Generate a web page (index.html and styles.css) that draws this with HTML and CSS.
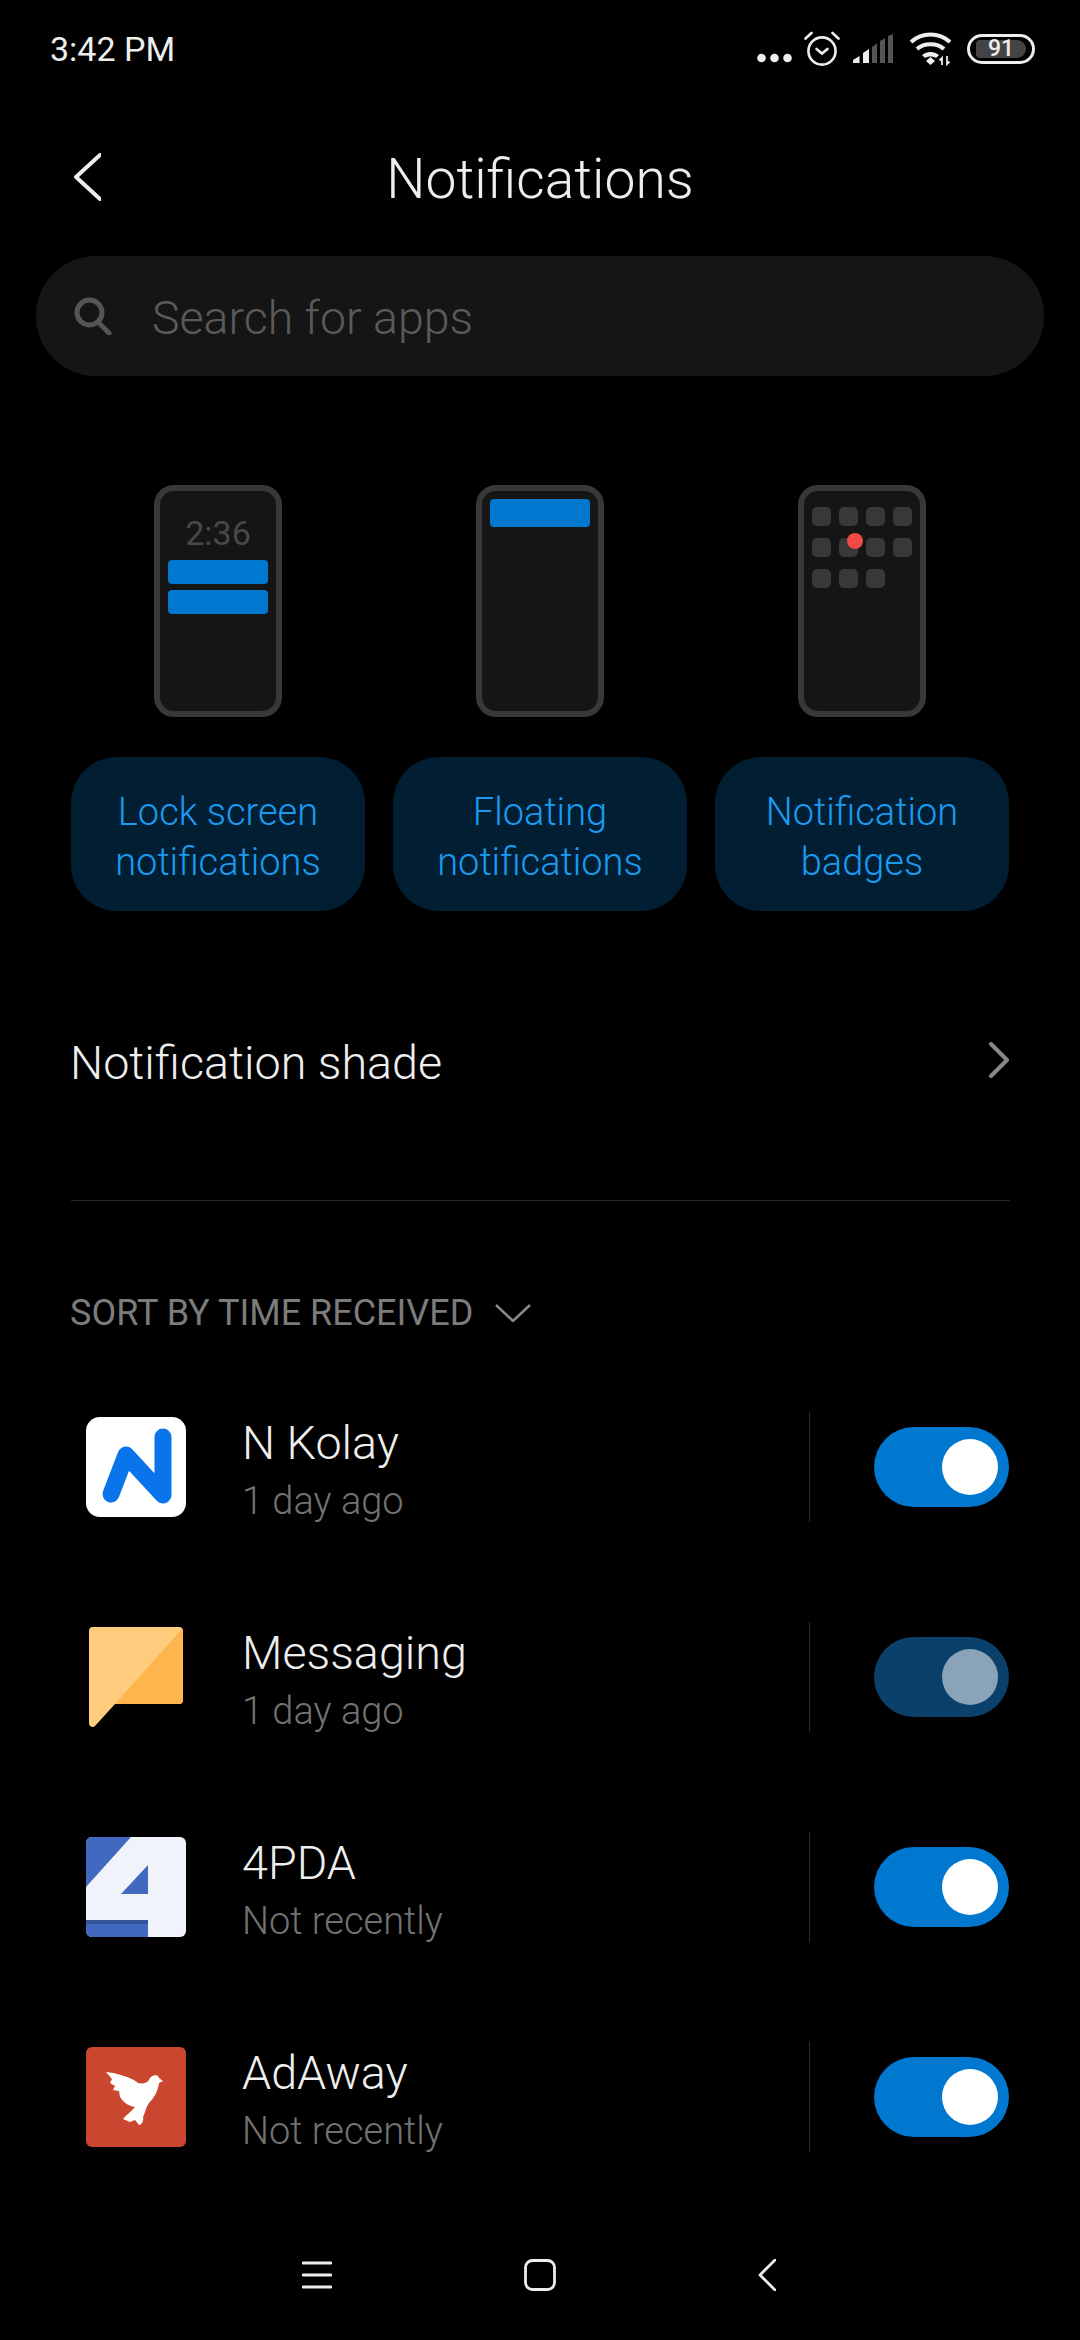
FILE: index.html
```html
<!DOCTYPE html>
<html lang="en">
<head>
  <meta charset="UTF-8" />
  <meta name="viewport" content="width=device-width, initial-scale=1" />
  <title>Notifications</title>
  <link rel="stylesheet" href="styles.css">
</head>
<body>
  <div class="status-bar">
    <span class="clock">3:42 PM</span>
    <div class="status-icons">
      <svg class="ic-dots" width="35" height="36" viewBox="0 0 35 36"><g fill="#eee"><circle cx="4.5" cy="27" r="4.3"/><circle cx="17.5" cy="27" r="4.3"/><circle cx="30.5" cy="27" r="4.3"/></g></svg>
      <svg class="ic-alarm" width="36" height="36" viewBox="0 0 36 36"><g fill="none" stroke="#eee" stroke-width="2.6" stroke-linecap="round"><circle cx="18" cy="20" r="13.6"/><path d="M12.5 18l5.5 4.5 5.5-4.5"/><path d="M1.5 7.500L7.500 2"/><path d="M34.500 7.500L28.500 2"/></g></svg>
      <svg class="ic-signal" width="40" height="30" viewBox="0 0 40 30"><path d="M0 29v-3l6.500-4v7z" fill="#eee"/><path d="M10 29v-10l6-4v14z" fill="#eee"/><path d="M19 29v-16l5-3.500v19.500z" fill="#555"/><path d="M27 29v-22l5-3v25z" fill="#555"/><path d="M35 29v-27l5-2v29z" fill="#555"/></svg>
      <svg class="ic-wifi" width="43" height="34" viewBox="0 0 43 34"><g fill="none" stroke="#eee" stroke-width="4"><path d="M2 10c11-10 28-10 39 0"/><path d="M8 17c7-6.500 20-6.500 27 0"/></g><path d="M13 23c5-4 12-4 17 0l-3 3c-3-2-8-2-11 0z" fill="#eee"/><path d="M21.500 25l4.500 4-4.500 4-4.500-4z" fill="#eee"/><path d="M33 33v-7l-2.500 2.500M38 24v8l2.500-2.500" fill="none" stroke="#eee" stroke-width="1.800"/></svg>
      <div class="battery"><span class="battery-level">91</span></div>
    </div>
  </div>

  <header class="title-bar">
    <svg class="back" width="28" height="48" viewBox="0 0 28 48"><path d="M27 2L3 24l24 22" fill="none" stroke="#eee" stroke-width="4" stroke-linecap="round" stroke-linejoin="round"/></svg>
    <h1>Notifications</h1>
  </header>

  <div class="search">
    <svg width="38" height="38" viewBox="0 0 38 38"><g fill="none" stroke="#555" stroke-width="5"><circle cx="15.500" cy="15.500" r="12.500"/><path d="M24 25l11 11" stroke-linecap="round"/></g></svg>
    <span>Search for apps</span>
  </div>

  <section class="modes">
    <div class="mode">
      <div class="phone phone-lock">
        <span class="phone-time">2:36</span>
        <div class="phone-bar"></div>
        <div class="phone-bar"></div>
      </div>
      <a class="mode-btn">Lock screen<br>notifications</a>
    </div>
    <div class="mode">
      <div class="phone phone-float">
        <div class="phone-bar"></div>
      </div>
      <a class="mode-btn">Floating<br>notifications</a>
    </div>
    <div class="mode">
      <div class="phone phone-badges">
        <div class="app-grid">
          <i></i><i></i><i></i><i></i>
          <i></i><i class="has-badge"></i><i></i><i></i>
          <i></i><i></i><i></i>
        </div>
      </div>
      <a class="mode-btn">Notification<br>badges</a>
    </div>
  </section>

  <div class="shade-row">
    <span>Notification shade</span>
    <svg width="22" height="36" viewBox="0 0 22 36"><path d="M3 2l16 16L3 34" fill="none" stroke="#888" stroke-width="4" stroke-linecap="round" stroke-linejoin="round"/></svg>
  </div>

  <hr class="divider">

  <div class="sort-row">
    <span>SORT BY TIME RECEIVED</span>
    <svg width="36" height="18" viewBox="0 0 36 18"><path d="M1 1l17 16L35 1" fill="none" stroke="#888" stroke-width="2.500"/></svg>
  </div>

  <ul class="app-list">
    <li class="app">
      <svg class="app-icon" width="100" height="100" viewBox="0 0 100 100"><rect width="100" height="100" rx="14" fill="#fff"/><path d="M25 77L40 38 77 78V20" fill="none" stroke="#0a74ea" stroke-width="17" stroke-linecap="round" stroke-linejoin="round"/></svg>
      <div class="app-text">
        <div class="app-name">N Kolay</div>
        <div class="app-time">1 day ago</div>
      </div>
      <div class="app-sep"></div>
      <div class="toggle"><div class="knob"></div></div>
    </li>
    <li class="app">
      <svg class="app-icon" width="100" height="100" viewBox="0 0 100 100"><path d="M7 0h86a4 4 0 0 1 4 4v69a4 4 0 0 1-4 4H29L9 99c-2 2-6 1-6-3V4a4 4 0 0 1 4-4z" fill="#ffcb7c"/><path d="M96 2c1 .6 1 1.400 1 2v69a4 4 0 0 1-4 4H29z" fill="#ffb54d"/></svg>
      <div class="app-text">
        <div class="app-name">Messaging</div>
        <div class="app-time">1 day ago</div>
      </div>
      <div class="app-sep"></div>
      <div class="toggle toggle-dim"><div class="knob"></div></div>
    </li>
    <li class="app">
      <svg class="app-icon" width="100" height="100" viewBox="0 0 100 100"><rect width="100" height="100" rx="6" fill="#f1f3fa"/><path d="M6 0h39L0 50V6a6 6 0 0 1 6-6z" fill="#4169bf"/><path d="M62 28v29H35z" fill="#4169bf"/><path d="M0 83h62v17H6a6 6 0 0 1-6-6z" fill="#4169bf"/><path d="M0 83h62v4H0z" fill="#34559c"/></svg>
      <div class="app-text">
        <div class="app-name">4PDA</div>
        <div class="app-time">Not recently</div>
      </div>
      <div class="app-sep"></div>
      <div class="toggle"><div class="knob"></div></div>
    </li>
    <li class="app">
      <svg class="app-icon" width="100" height="100" viewBox="0 0 100 100"><rect width="100" height="100" rx="6" fill="#c9472f"/><path d="M20 25C30 26 40 29 48 33L52 36C57 37 61 36 63 33 64 29 70 27 72 29L73 31 77 34 73 36C72 44 68 51 63 56 60 60 59 66 57 70 58 73 56 78 53 78L49 73 44 75 37 72C41 67 46 64 49 60 42 59 37 55 34 50L33 44 27 43 29 39 24 36 26 32z" fill="#fff"/></svg>
      <div class="app-text">
        <div class="app-name">AdAway</div>
        <div class="app-time">Not recently</div>
      </div>
      <div class="app-sep"></div>
      <div class="toggle"><div class="knob"></div></div>
    </li>
  </ul>

  <nav class="nav-bar">
    <svg class="nav-menu" width="30" height="30" viewBox="0 0 30 30"><path d="M1 3h28M1 15h28M1 27h28" stroke="#eee" stroke-width="2.800" stroke-linecap="round"/></svg>
    <svg class="nav-home" width="32" height="32" viewBox="0 0 32 32"><rect x="1.500" y="1.500" width="29" height="29" rx="7" fill="none" stroke="#eee" stroke-width="2.800"/></svg>
    <svg class="nav-back" width="18" height="32" viewBox="0 0 18 32"><path d="M17 1L2 16l15 15" fill="none" stroke="#eee" stroke-width="2.800" stroke-linecap="round" stroke-linejoin="round"/></svg>
  </nav>
</body>
</html>
```

FILE: styles.css
```css
* {
  box-sizing: border-box;
  margin: 0;
  padding: 0;
}
body {
  width: 1080px;
  height: 2340px;
  overflow: hidden;
  background: #000;
  color: #eee;
  font-family: Roboto, "Liberation Sans", sans-serif;
  font-weight: 300;
}
svg {
  display: block;
  flex-shrink: 0;
}

/* status bar */
.status-bar {
  height: 98px;
  padding: 0 45px 0 50px;
  display: flex;
  align-items: center;
  justify-content: space-between;
}
.clock {
  font-size: 34px;
  font-weight: 400;
}
.status-icons {
  display: flex;
  align-items: center;
}
.ic-alarm {
  margin-left: 12px;
}
.ic-signal {
  margin-left: 13px;
}
.ic-wifi {
  margin-left: 16px;
}
.battery {
  margin-left: 15px;
  width: 68px;
  height: 30px;
  border: 3px solid #eee;
  border-radius: 15px;
  padding: 3px 6px;
}
.battery-level {
  display: block;
  height: 100%;
  background: #444;
  border-radius: 4px 9px 9px 4px;
  font-size: 23px;
  font-weight: 500;
  line-height: 18px;
  text-align: center;
  color: #eee;
}

/* title */
.title-bar {
  height: 158px;
  padding: 0 73px;
  display: grid;
  grid-template-columns: 1fr auto 1fr;
  align-items: center;
}
.title-bar h1 {
  padding-top: 3px;
  font-size: 55.2px;
  font-weight: 300;
}

/* search */
.search {
  margin: 0 36px;
  height: 120px;
  border-radius: 60px;
  background: #151515;
  padding-left: 38px;
  display: flex;
  align-items: center;
  gap: 40px;
  font-size: 46.5px;
  color: #5a5a5a;
}
.search span {
  padding-top: 4px;
}

/* mode cards */
.modes {
  margin-top: 109px;
  padding: 0 71px;
  display: grid;
  grid-template-columns: repeat(3, 294px);
  gap: 28px;
}
.mode {
  display: flex;
  flex-direction: column;
  align-items: center;
  gap: 40px;
}
.phone {
  width: 128px;
  height: 232px;
  border: 6px solid #383838;
  border-radius: 20px;
  background: #151515;
  display: flex;
  flex-direction: column;
  align-items: center;
}
.phone-bar {
  width: 100px;
  background: #0078d0;
  border-radius: 4px;
}
.phone-lock {
  padding-top: 23px;
  gap: 6px;
}
.phone-lock .phone-bar {
  height: 24px;
}
.phone-time {
  font-size: 34px;
  font-weight: 400;
  line-height: 38px;
  height: 40px;
  color: #484848;
}
.phone-float {
  padding-top: 8px;
}
.phone-float .phone-bar {
  height: 28px;
}
.phone-badges {
  padding: 16px 8px 0;
}
.app-grid {
  display: grid;
  grid-template-columns: repeat(4, 19px);
  grid-auto-rows: 19px;
  column-gap: 8px;
  row-gap: 12px;
}
.app-grid i {
  display: block;
  position: relative;
  background: #383838;
  border-radius: 5px;
}
.app-grid .has-badge::after {
  content: "";
  position: absolute;
  top: -5px;
  left: 8px;
  width: 16px;
  height: 16px;
  border-radius: 50%;
  background: #f04a45;
}
.mode-btn {
  width: 294px;
  height: 154px;
  border-radius: 46px;
  background: #011e33;
  color: #1a9bf0;
  font-size: 38px;
  line-height: 50px;
  padding-top: 5px;
  text-align: center;
  display: flex;
  align-items: center;
  justify-content: center;
}

/* shade row */
.shade-row {
  margin-top: 99px;
  height: 100px;
  padding: 0 70px;
  display: flex;
  align-items: center;
  justify-content: space-between;
  font-size: 46.7px;
}
.shade-row span {
  padding-top: 6px;
}
.divider {
  margin: 90px 70px 0 71px;
  border: 0;
  height: 1px;
  background: #282828;
}
.sort-row {
  height: 161px;
  padding: 63px 70px 0;
  display: flex;
  align-items: center;
  gap: 22px;
  font-size: 36px;
  font-weight: 400;
  color: #7c7c7c;
}

/* app list */
.app-list {
  list-style: none;
}
.app {
  height: 210px;
  padding: 0 71px 0 86px;
  display: flex;
  align-items: center;
}
.app-text {
  margin-left: 56px;
  padding-top: 7px;
  flex: 1;
}
.app-name {
  font-size: 46.7px;
  line-height: 54px;
}
.app-time {
  margin-top: 7px;
  font-size: 38px;
  line-height: 48px;
  color: #727272;
}
.app-sep {
  width: 1px;
  height: 110px;
  background: #2e2e2e;
  margin-right: 64px;
}
.toggle {
  width: 135px;
  height: 80px;
  border-radius: 40px;
  background: #0078d0;
  padding: 12px 11px;
  display: flex;
  justify-content: flex-end;
}
.knob {
  width: 56px;
  height: 56px;
  border-radius: 50%;
  background: #fff;
}
.toggle-dim {
  background: #0a4069;
}
.toggle-dim .knob {
  background: #8aa3b8;
}

/* nav bar */
.nav-bar {
  height: 138px;
  padding: 8px 0 0 302px;
  display: flex;
  align-items: center;
}
.nav-home {
  margin-left: 192px;
}
.nav-back {
  margin-left: 202px;
}
```
